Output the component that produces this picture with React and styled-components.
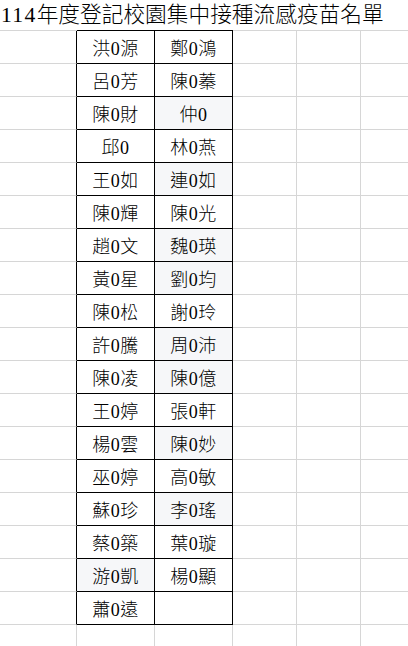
import React from "react";
import styled, { createGlobalStyle } from "styled-components";

const GlobalStyle = createGlobalStyle`
  html, body {
    margin: 0;
    padding: 0;
    background: #ffffff;
  }
  body {
    font-family: "Liberation Serif", "Noto Sans CJK TC", serif;
    color: #000;
    overflow: hidden;
  }
`;

const GRID = "#d6d6d6";
const INK = "#000000";
const SHADE = "#f6f7f9";
const COLS = [77, 78, 78, 64, 64, 64];

const Sheet = styled.div`
  display: flex;
  flex-direction: column;
  width: 408px;
  height: 646px;
  overflow: hidden;
`;

const Row = styled.div`
  display: flex;
  flex: none;
  height: ${(p) => p.$h}px;
`;

const Cell = styled.div`
  flex: none;
  box-sizing: border-box;
  width: ${(p) => p.$w}px;
  height: 100%;
  border-right: 1px solid ${(p) => p.$right || "transparent"};
  border-bottom: 1px solid ${(p) => p.$bottom || GRID};
  background: ${(p) => (p.$shade ? SHADE : "transparent")};
  display: flex;
  align-items: center;
  justify-content: center;
  padding-top: 3px;
  font-size: 18px;
  font-weight: 300;
  letter-spacing: 0.5px;
  line-height: 1;
  white-space: nowrap;
`;

const TitleCell = styled.div`
  flex: none;
  box-sizing: border-box;
  width: ${(p) => p.$w}px;
  height: 100%;
  border-bottom: 1px solid ${(p) => p.$bottom || GRID};
  overflow: visible;
  position: relative;
  z-index: ${(p) => (p.$first ? 1 : 0)};
`;

const Title = styled.div`
  white-space: nowrap;
  font-size: 21.7px;
  font-weight: 300;
  line-height: 1;
  padding: 5px 0 0 1px;
`;

const Digits = styled.span`
  letter-spacing: 1.3px;
`;

const data = [
  ["洪0源", "鄭0鴻"],
  ["呂0芳", "陳0蓁"],
  ["陳0財", "仲0", 2],
  ["邱0", "林0燕"],
  ["王0如", "連0如", 2],
  ["陳0輝", "陳0光"],
  ["趙0文", "魏0瑛", 2],
  ["黃0星", "劉0均", 2],
  ["陳0松", "謝0玲"],
  ["許0騰", "周0沛", 2],
  ["陳0凌", "陳0億", 2],
  ["王0婷", "張0軒"],
  ["楊0雲", "陳0妙", 2],
  ["巫0婷", "高0敏"],
  ["蘇0珍", "李0瑤", 2],
  ["蔡0築", "葉0璇"],
  ["游0凱", "楊0顯", 1],
  ["蕭0遠", ""],
];

export default function App() {
  return (
    <>
      <GlobalStyle />
      <Sheet>
        <Row $h={31}>
          {COLS.map((w, i) => (
            <TitleCell
              key={i}
              $w={w}
              $first={i === 0}
              $bottom={i === 1 || i === 2 ? INK : GRID}
            >
              {i === 0 && (
                <Title>
                  <Digits>114</Digits>年度登記校園集中接種流感疫苗名單
                </Title>
              )}
            </TitleCell>
          ))}
        </Row>
        {data.map(([a, b, shade], r) => (
          <Row key={r} $h={33}>
            <Cell $w={COLS[0]} $right={INK} />
            <Cell $w={COLS[1]} $right={INK} $bottom={INK} $shade={shade === 1}>
              {a}
            </Cell>
            <Cell $w={COLS[2]} $right={INK} $bottom={INK} $shade={shade === 2}>
              {b}
            </Cell>
            <Cell $w={COLS[3]} $right={GRID} />
            <Cell $w={COLS[4]} $right={GRID} />
            <Cell $w={COLS[5]} $right={GRID} />
          </Row>
        ))}
        <Row $h={33}>
          {COLS.map((w, i) => (
            <Cell key={i} $w={w} $right={GRID} />
          ))}
        </Row>
      </Sheet>
    </>
  );
}
